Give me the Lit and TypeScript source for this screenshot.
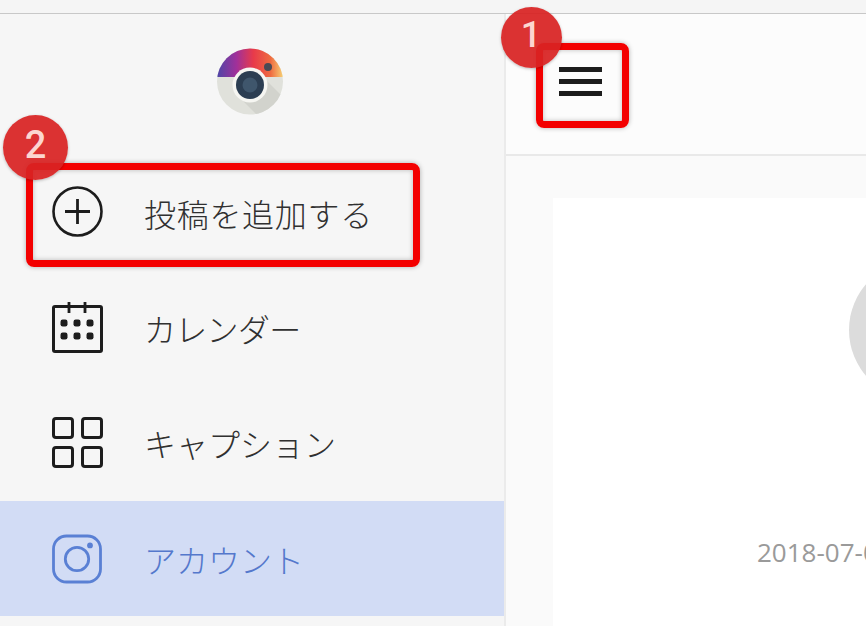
import { LitElement, html, css, svg } from "lit";
import { customElement } from "lit/decorators.js";

const icons = {
  plus: svg`<circle cx="26.5" cy="25.5" r="24" fill="none" stroke="currentColor" stroke-width="2.6"/><path d="M26.5 13v25M14 25.5h25" stroke="currentColor" stroke-width="2.8" fill="none"/>`,
  cal: svg`<rect x="2.5" y="5.5" width="48" height="45" rx="1.5" fill="none" stroke="currentColor" stroke-width="3"/><path d="M18 1v11M34 1v11" stroke="currentColor" stroke-width="2.8"/>
    ${[13, 26, 39].flatMap((x) => [22, 35].map((y) => svg`<rect x="${x - 3.5}" y="${y - 3.5}" width="7" height="7" rx="2.2" fill="currentColor"/>`))}`,
  grid: svg`${[[2.5, 2.5], [31.5, 2.5], [2.5, 31.5], [31.5, 31.5]].map(([x, y]) => svg`<rect x="${x}" y="${y}" width="19" height="19" rx="2.5" fill="none" stroke="currentColor" stroke-width="3"/>`)}`,
  ig: svg`<rect x="2.5" y="4" width="47" height="46" rx="13" fill="none" stroke="currentColor" stroke-width="2.8"/><circle cx="26" cy="27" r="11.7" fill="none" stroke="currentColor" stroke-width="2.8"/><circle cx="39" cy="13.4" r="2.9" fill="currentColor"/>`,
};

@customElement("app-root")
export class AppRoot extends LitElement {
  static styles = css`
    :host { display: block; width: 866px; height: 626px; overflow: hidden; position: relative; background: #fafafa;
      font-family: "Noto Sans CJK JP", "Noto Sans", sans-serif; }
    .top { height: 13px; background: #f5f5f5; border-bottom: 1px solid #c8c8c8; }
    .body { display: flex; height: 612px; }
    .side { width: 504px; flex: none; background: #f6f6f6; border-right: 2px solid #ebebeb; }
    .logoRow { height: 141px; display: flex; justify-content: center; padding: 34px 4px 0 0; box-sizing: border-box; }
    .logo { width: 68px; height: 68px; }
    .item { height: 115.3px; display: flex; align-items: center; padding-left: 51px; color: #303030; font-size: 32px; font-weight: 300; }
    .item.on { background: #d2dcf5; color: #5478cc; }
    .item svg { width: 54px; height: 54px; flex: none; color: #1d1d1d; }
    .item.on svg { color: #5a80d4; }
    .item span { margin-left: 39px; line-height: 1; }
    .item.wide span { letter-spacing: 0.7px; }
    .item.tight span { letter-spacing: -0.7px; }
    .main { flex: 1; min-width: 0; display: flex; flex-direction: column; }
    .head { height: 142px; flex: none; background: #fcfcfc; border-bottom: 2px solid #e9e9e9; display: flex; align-items: center; padding: 0 0 5px 53px; box-sizing: border-box; }
    .burger { display: flex; flex-direction: column; gap: 7px; width: 43px; }
    .burger i { display: block; height: 5px; background: #1c1c1c; }
    .content { flex: 1; padding: 42px 0 0 47px; }
    .card { height: 500px; background: #fff; overflow: hidden; display: flex; flex-direction: column; }
    .avatar { width: 140px; height: 140px; border-radius: 50%; background: #dcdcdc; margin: 62px 0 0 296px; flex: none; }
    .date { margin: 139px 0 0 204px; color: #9a9a9a; font-size: 26px; line-height: 1; white-space: nowrap; font-family: "Open Sans", sans-serif; }
    .mark { position: absolute; border: 7px solid #f30000; border-radius: 8px; box-sizing: border-box; box-shadow: 0 0 5px rgba(0,0,0,.3), inset 0 0 5px rgba(0,0,0,.25); }
    .m1 { left: 536px; top: 43px; width: 93px; height: 85px; }
    .m2 { left: 26px; top: 163px; width: 394px; height: 104px; }
    .badge { position: absolute; border-radius: 50%; background: rgba(216, 34, 34, .93); color: #fcd6d0; display: flex; align-items: center; justify-content: center; font-family: Roboto, sans-serif; font-weight: 500; line-height: 1; box-sizing: border-box; padding-bottom: 5px; box-shadow: 0 1px 3px rgba(0,0,0,.25); }
    .b1 { left: 501px; top: 7px; width: 61px; height: 61px; font-size: 36px; padding-right: 1px; }
    .b2 { left: 3px; top: 115px; width: 65px; height: 65px; font-size: 38px; }
  `;

  private item(icon: unknown, label: string, cls = "") {
    return html`<div class="item ${cls}"><svg viewBox="0 0 54 54">${icon}</svg><span>${label}</span></div>`;
  }

  render() {
    return html`
      <div class="top"></div>
      <div class="body">
        <div class="side">
          <div class="logoRow">
            <svg class="logo" viewBox="0 0 68 68">
              <defs>
                <linearGradient id="g" x1="0" x2="1" y1="0" y2="0">
                  <stop offset="0" stop-color="#4a47a8"/><stop offset=".3" stop-color="#a0309a"/>
                  <stop offset=".55" stop-color="#e83a4a"/><stop offset=".8" stop-color="#ee6a40"/><stop offset="1" stop-color="#f8d878"/>
                </linearGradient>
                <clipPath id="c"><circle cx="34" cy="33.5" r="33"/></clipPath>
              </defs>
              <circle cx="34" cy="33.5" r="33" fill="#e0e1db"/>
              <g clip-path="url(#c)">
                <path d="M44 26 L68 50 L68 68 L42 68 L22 48 Z" fill="#d2d3cd"/>
                <rect x="0" y="0" width="68" height="29" fill="url(#g)"/>
              </g>
              <circle cx="34" cy="37" r="17.5" fill="#f6f6f2"/>
              <circle cx="34" cy="37" r="14" fill="#2c3e52"/>
              <circle cx="34" cy="37" r="7.5" fill="#3f566c"/>
              <circle cx="52" cy="19" r="4" fill="#4a4a55"/>
            </svg>
          </div>
          ${this.item(icons.plus, "投稿を追加する", "wide")}
          ${this.item(icons.cal, "カレンダー", "tight")}
          ${this.item(icons.grid, "キャプション")}
          ${this.item(icons.ig, "アカウント", "on")}
        </div>
        <div class="main">
          <div class="head"><div class="burger"><i></i><i></i><i></i></div></div>
          <div class="content">
            <div class="card">
              <div class="avatar"></div>
              <div class="date">2018-07-06</div>
            </div>
          </div>
        </div>
      </div>
      <div class="mark m1"></div>
      <div class="mark m2"></div>
      <div class="badge b1">1</div>
      <div class="badge b2">2</div>
    `;
  }
}
